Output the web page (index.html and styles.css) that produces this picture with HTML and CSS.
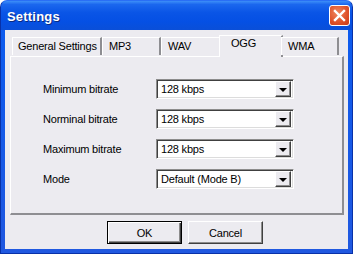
FILE: index.html
```html
<!DOCTYPE html>
<html>
<head>
<meta charset="utf-8">
<link rel="stylesheet" href="styles.css">
</head>
<body>
<div class="window">
  <div class="titlebar">
    <span class="title">Settings</span>
    <span class="close"><svg width="13" height="13" viewBox="0 0 13 13"><path d="M2 2 L11 11 M11 2 L2 11" stroke="#fff" stroke-width="2.4" stroke-linecap="square"/></svg></span>
  </div>
  <div class="client">
    <div class="tabs">
      <div class="tab t1">General Settings</div>
      <div class="tab t2">MP3</div>
      <div class="tab t3">WAV</div>
      <div class="tab active t4">OGG</div>
      <div class="tab t5">WMA</div>
    </div>
    <div class="panel">
      <div class="row"><span class="label">Minimum bitrate</span><div class="combo"><span class="val">128 kbps</span><span class="drop"><i class="arrow"></i></span></div></div>
      <div class="row"><span class="label">Norminal bitrate</span><div class="combo"><span class="val">128 kbps</span><span class="drop"><i class="arrow"></i></span></div></div>
      <div class="row"><span class="label">Maximum bitrate</span><div class="combo"><span class="val">128 kbps</span><span class="drop"><i class="arrow"></i></span></div></div>
      <div class="row"><span class="label">Mode</span><div class="combo"><span class="val">Default (Mode B)</span><span class="drop"><i class="arrow"></i></span></div></div>
    </div>
    <div class="buttons">
      <div class="btn default">OK</div>
      <div class="btn">Cancel</div>
    </div>
  </div>
</div>
</body>
</html>
```

FILE: styles.css
```css
* { box-sizing: border-box; }
html, body { margin: 0; padding: 0; background: #fff; }
body { font-family: "Liberation Sans", Arial, sans-serif; font-size: 11px; color: #000; letter-spacing: -0.2px; }

.window {
  width: 353px; height: 254px;
  display: flex; flex-direction: column;
  background: linear-gradient(#0a5bf0, #2058e0);
  padding: 0 4px 4px 4px;
  border-radius: 7px 7px 0 0;
  border: 1px solid #0831a8;
  border-top-color: #2a6ff5;
}
.titlebar {
  height: 29px; flex: none;
  display: flex; align-items: center; justify-content: space-between;
  background: linear-gradient(#3d8ff8 0%, #1b67ee 12%, #0a55e6 40%, #0550e4 70%, #0a4fd8 100%);
  margin: 0 -4px; padding: 1px 2px 0 6px;
  border-radius: 6px 6px 0 0;
}
.title {
  color: #fff; font-weight: bold; font-size: 13px;
  text-shadow: 1px 1px 0 #0a2a80;
  letter-spacing: 0.2px;
}
.close {
  width: 21px; height: 21px;
  border: 1px solid #fff; border-radius: 3px;
  background: radial-gradient(circle at 40% 35%, #f08860, #de5028 60%, #c83c18);
  display: flex; align-items: center; justify-content: center;
  margin-top: -1px;
}
.close svg { display: block; }

.client {
  flex: 1;
  background: #ecebf0;
  padding: 6px 0 0 5px;
  display: flex; flex-direction: column;
}
.tabs {
  display: flex; height: 20px; padding-left: 2px; align-items: flex-end;
  position: relative; z-index: 2;
}
.tab {
  flex: none; white-space: nowrap;
  height: 18px; margin-bottom: 1px;
  border: 1px solid #fff; border-bottom: none;
  border-right: 2px solid #8e8e92;
  background: #ecebf0;
  padding: 2px 0 0 5px;
}
.t1 { width: 90px; }
.t2 { width: 59px; padding-left: 6px; }
.t3 { width: 60px; padding-left: 6px; }
.t4 { width: 62px; }
.t5 { width: 58px; padding-left: 6px; }
.tab.active {
  height: 22px; margin: 0 -2px -1px -2px; width: 64px;
  padding: 1px 0 0 11px;
}

.panel {
  width: 334px; height: 159px; flex: none;
  border: 1px solid #fff; border-right: 2px solid #8e8e92; border-bottom: 2px solid #8e8e92;
  padding: 22px 0 0 32px;
  display: flex; flex-direction: column; gap: 10px;
}
.row { display: flex; align-items: center; height: 20px; }
.label { width: 113px; flex: none; }
.combo {
  width: 138px; height: 20px;
  border: 1px solid; border-color: #8c8c8c #fff #fff #8c8c8c;
  box-shadow: inset 1px 1px 0 #404040, inset -1px -1px 0 #dcdcdc;
  background: #fff;
  display: flex; align-items: center; justify-content: space-between;
  padding: 1px 2px 1px 4px;
}
.drop {
  width: 16px; height: 16px;
  background: #ecebf0;
  border: 1px solid; border-color: #fff #404040 #404040 #fff;
  box-shadow: inset -1px -1px 0 #8c8c8c;
  display: flex; align-items: center; justify-content: center;
}
.arrow {
  width: 0; height: 0;
  border-left: 4px solid transparent; border-right: 4px solid transparent;
  border-top: 4px solid #000;
  margin-top: 1px;
}

.buttons {
  display: flex; gap: 6px; padding: 6px 0 0 97px;
}
.btn {
  width: 75px; height: 23px;
  border: 1px solid; border-color: #fff #404040 #404040 #fff;
  box-shadow: inset -1px -1px 0 #8c8c8c;
  display: flex; align-items: center; justify-content: center;
  background: #ecebf0;
}
.btn.default {
  border: 1px solid #000;
  box-shadow: inset 1px 1px 0 #fff, inset -1px -1px 0 #404040, inset -2px -2px 0 #8c8c8c;
}
```
